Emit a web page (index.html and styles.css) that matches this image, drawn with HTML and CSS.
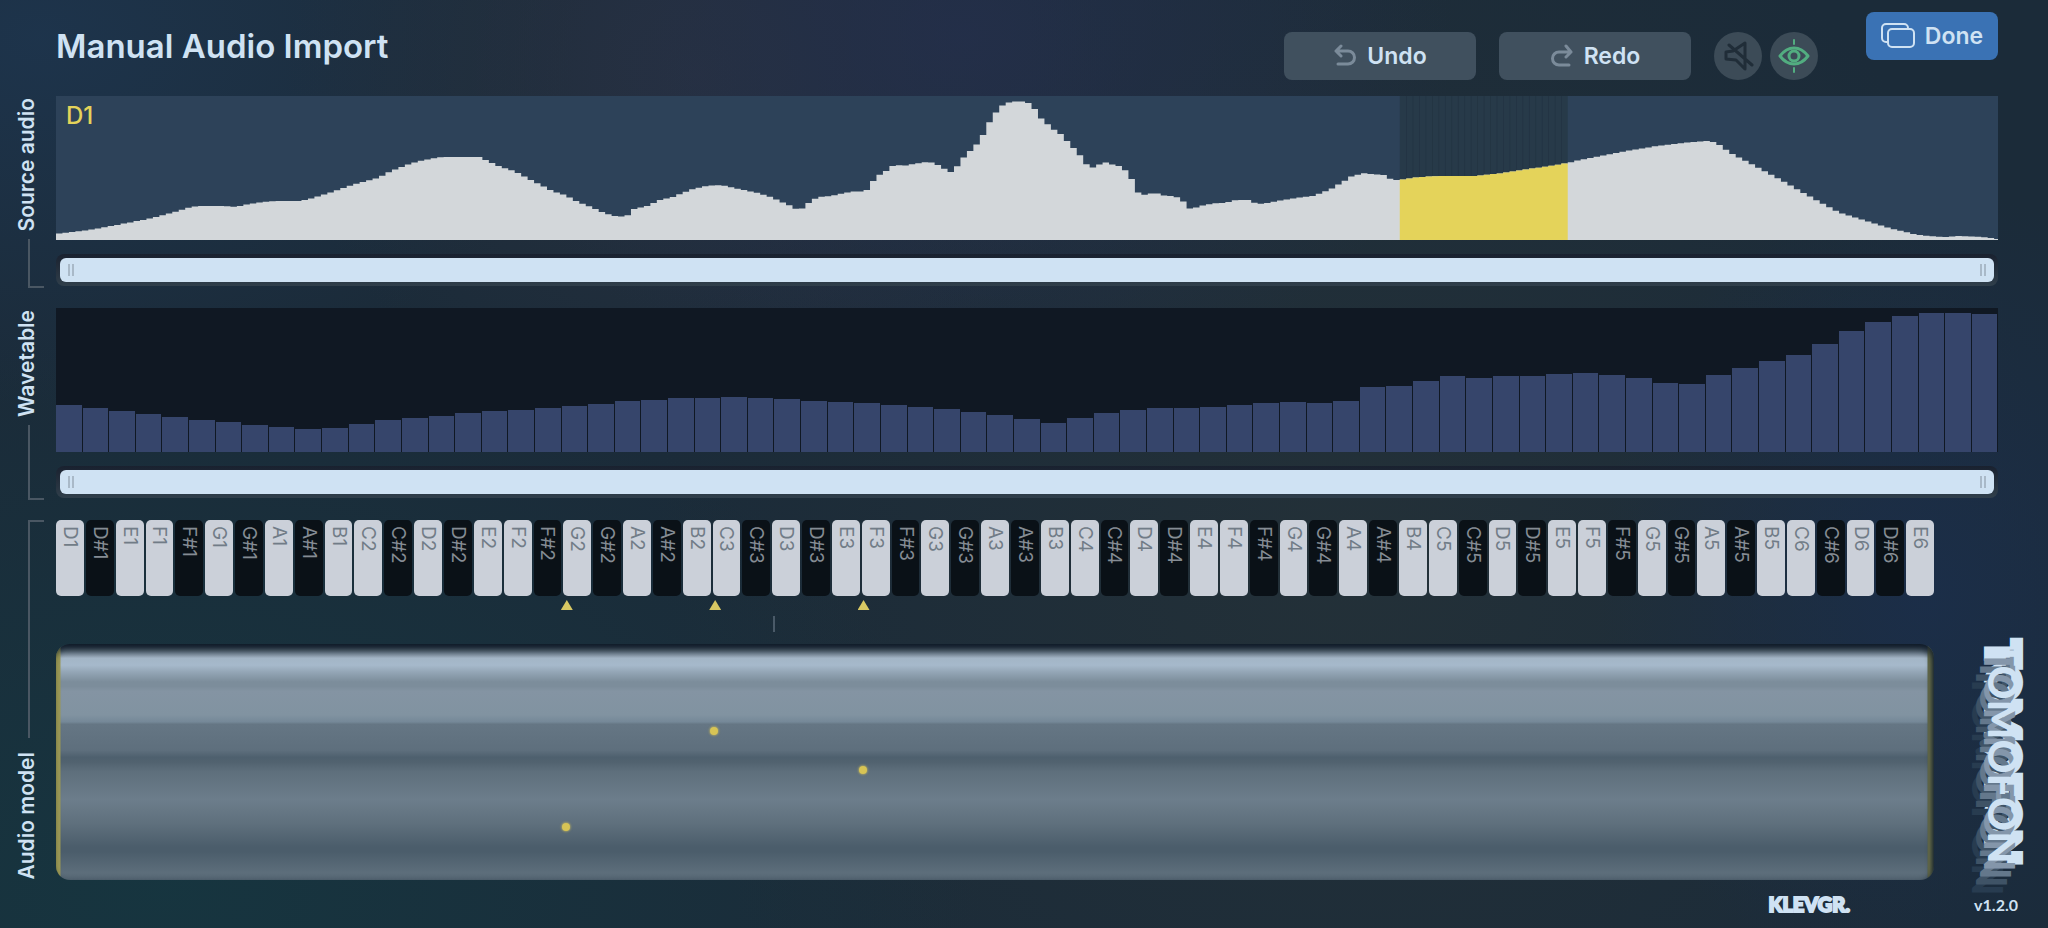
FILE: index.html
```html
<!DOCTYPE html>
<html lang="en">
<head>
    <meta charset="UTF-8">
    <meta name="viewport" content="width=device-width, initial-scale=1.0">
    <title>Tomofon - Manual Audio Import</title>

    <link rel="stylesheet" href="styles.css">
</head>
<body>

<div class="app">
    <header class="header">
        <h1 class="title">Manual Audio Import</h1>

        <div class="tools">
            <button class="btn" type="button">
                <svg class="btn-icon" width="24" height="24" viewBox="0 0 24 24">
                    <path d="M8 2L3 7l5 5M3 7h12a6 6 0 0 1 0 13H5"/>
                </svg>
                Undo
            </button>
            <button class="btn" type="button">
                <svg class="btn-icon" width="24" height="24" viewBox="0 0 24 24">
                    <path d="M16 2l5 6-5 5M21 8H9a6 6 0 0 0 0 13h10"/>
                </svg>
                Redo
            </button>
            <div class="toggles">
                <button class="round muted" type="button" aria-label="Mute">
                    <svg width="32" height="32" viewBox="0 0 32 32">
                        <path d="M4 12l7-1L23 3v26l-9-9-10-1zM7 5l23 20"/>
                    </svg>
                </button>
                <button class="round view" type="button" aria-label="Follow view">
                    <svg width="36" height="36" viewBox="0 0 36 36">
                        <path d="M4 18q6-8 14-8t14 8q-6 8-14 8T4 18z"/>
                        <circle cx="18" cy="18" r="5"/>
                        <path class="thin" d="M18 2v4M18 30v4"/>
                    </svg>
                </button>
            </div>
        </div>

        <button class="btn done" type="button">
            <svg width="34" height="26" viewBox="0 0 34 26">
                <path d="M7 19H5a4 4 0 0 1-4-4V5a4 4 0 0 1 4-4h18a4 4 0 0 1 4 4v1"/>
                <rect x="7" y="6" width="26" height="18" rx="4"/>
            </svg>
            Done
        </button>
    </header>

    <section class="row">
        <div class="rail">
            <h2 class="rail-label">Source audio</h2>
            <div class="bracket"></div>
        </div>
        <div class="panel">
            <div class="chart source">
                <span class="note">D1</span>
                <svg class="wave" id="wave" viewBox="0 0 3006 144" preserveAspectRatio="none"></svg>
            </div>
            <div class="scroll">
                <div class="thumb">
                    <button class="grip" type="button" aria-label="Source range start"></button>
                    <button class="grip" type="button" aria-label="Source range end"></button>
                </div>
            </div>
        </div>
    </section>

    <section class="row">
        <div class="rail">
            <h2 class="rail-label">Wavetable</h2>
            <div class="bracket"></div>
        </div>
        <div class="panel">
            <div class="chart table" id="table"></div>
            <div class="scroll">
                <div class="thumb">
                    <button class="grip" type="button" aria-label="Wavetable range start"></button>
                    <button class="grip" type="button" aria-label="Wavetable range end"></button>
                </div>
            </div>
        </div>
    </section>

    <section class="row model-row">
        <div class="rail">
            <div class="bracket top"></div>
            <h2 class="rail-label">Audio model</h2>
        </div>
        <div class="model-col">
            <div class="keys" id="keys"></div>
            <div class="markers" id="markers">
                <span class="tick"></span>
            </div>
            <div class="model" id="model"></div>
        </div>
        <div class="brand">
            <div class="logo">TOMOFON</div>
        </div>
    </section>

    <footer class="footer">
        <span class="maker">KLEVGR.</span>
        <span class="version">v1.2.0</span>
    </footer>
</div>

<script src="script.js"></script>
</body>
</html>
```
FILE: styles.css
```css
* {
    box-sizing: border-box;
}

body {
    margin: 0;
    color: #cfe2f3;
    font-family: "Inter", sans-serif;
    background:
        radial-gradient(ellipse 24% 40% at 47% 4%, rgba(36, 47, 76, 0.8), transparent),
        radial-gradient(ellipse 20% 40% at 34% 8%, rgba(42, 50, 64, 0.8), transparent),
        radial-gradient(ellipse 26% 40% at 2% 4%, rgba(30, 54, 80, 0.8), transparent),
        radial-gradient(ellipse 40% 60% at 8% 96%, rgba(22, 54, 64, 0.9), transparent),
        radial-gradient(ellipse 16% 44% at 94% 64%, rgba(27, 46, 74, 0.9), transparent),
        radial-gradient(ellipse 34% 80% at 66% 60%, rgba(36, 49, 56, 0.9), transparent),
        #1b2b39;
}

button {
    font-family: inherit;
    color: inherit;
    border: none;
    cursor: pointer;
}

svg {
    fill: none;
    stroke: currentColor;
    stroke-width: 2;
    stroke-linecap: round;
    stroke-linejoin: round;
}

.app {
    min-height: 100vh;
    display: flex;
    flex-direction: column;
}

/* header */

.header {
    height: 96px;
    display: flex;
    align-items: flex-start;
    padding: 12px 50px 0 56px;
}

.title {
    margin: 12px auto 0 0;
    font-size: 33px;
    line-height: 44px;
    font-weight: 600;
}

.tools {
    display: flex;
    gap: 23px;
    margin: 20px 48px 0 0;
}

.toggles {
    display: flex;
    gap: 8px;
}

.btn {
    width: 192px;
    height: 48px;
    display: flex;
    align-items: center;
    justify-content: center;
    gap: 10px;
    padding: 0;
    font-size: 23px;
    font-weight: 600;
    border-radius: 8px;
    background: #40505e;
}

.btn-icon {
    color: #7b8b9a;
    stroke-width: 3;
}

.done {
    width: 132px;
    background: #3a72b4;
}

.round {
    width: 48px;
    height: 48px;
    display: flex;
    align-items: center;
    justify-content: center;
    padding: 0;
    border-radius: 50%;
    background: #3c4b57;
}

.muted {
    color: #202d38;
}

.view {
    color: #52ad80;
}

.round svg {
    stroke-width: 3;
}

.round .thin {
    stroke-width: 2;
}

/* rows with the vertical label on the left */

.row {
    display: flex;
    margin-bottom: 18px;
}

.rail {
    flex: 0 0 56px;
    display: flex;
    flex-direction: column;
    padding: 2px 0 2px 11px;
}

.rail-label {
    width: 32px;
    margin: 0;
    font-size: 21px;
    line-height: 32px;
    font-weight: 600;
    writing-mode: vertical-rl;
    transform: rotate(180deg);
}

.bracket {
    flex: 1;
    width: 16px;
    margin: 8px 0 0 17px;
    border-left: 2px solid #4a5763;
    border-bottom: 2px solid #4a5763;
}

.bracket.top {
    margin: 0 0 14px 17px;
    border-top: 2px solid #4a5763;
    border-bottom: none;
}

.panel {
    flex: 1;
    margin-right: 50px;
    padding-bottom: 4px;
}

.chart {
    height: 144px;
    position: relative;
}

.source {
    background: #2d4259;
}

.note {
    position: absolute;
    left: 10px;
    top: 4px;
    font-size: 24px;
    line-height: 32px;
    font-weight: 500;
    color: #e4d35a;
}

.wave {
    display: block;
    width: 100%;
    height: 100%;
    stroke: none;
}

.wave-fill {
    fill: #d3d7da;
}

.wave-shade {
    fill: #273a49;
}

.wave-line {
    fill: #223342;
}

.wave-selected {
    fill: #e4d35a;
}

.table {
    display: flex;
    align-items: flex-end;
    gap: 1px;
    background: #101823;
}

.bar {
    flex: 1;
    background: #36456b;
}

.scroll {
    margin-top: 14px;
    padding: 4px;
    border-radius: 8px;
    background: linear-gradient(#19212f, #303f4b);
}

.thumb {
    height: 24px;
    display: flex;
    align-items: center;
    justify-content: space-between;
    padding: 0 8px;
    border-radius: 6px;
    background: #cfe2f3;
}

.grip {
    width: 6px;
    height: 12px;
    padding: 0;
    border: solid #a9b9c8;
    border-width: 0 2px;
    background: none;
    cursor: ew-resize;
}

/* keyboard and model */

.model-row {
    flex: 1;
    margin: 0;
}

.model-row .rail {
    padding-top: 0;
    padding-bottom: 0;
}

.model-col {
    flex: 1;
    min-width: 0;
    display: flex;
    flex-direction: column;
}

.keys {
    height: 76px;
    display: flex;
    gap: 2px;
}

.key {
    flex: 1;
    min-width: 0;
    padding: 6px 0 0;
    display: flex;
    align-items: center;
    justify-content: flex-start;
    font-size: 19px;
    line-height: 26px;
    writing-mode: vertical-rl;
    border-radius: 5px;
    color: #717c87;
    background: #cbd0d9;
}

.key.sharp {
    color: #858c94;
    background: #0a1117;
}

.markers {
    height: 48px;
    position: relative;
}

.marker {
    position: absolute;
    top: 4px;
    width: 12px;
    height: 10px;
    margin-left: -6px;
    background: #d8c863;
    clip-path: polygon(50% 0, 100% 100%, 0 100%);
}

.tick {
    position: absolute;
    top: 20px;
    left: 38.2%;
    width: 2px;
    height: 16px;
    background: #4a5a68;
}

.model {
    flex: 1;
    min-height: 236px;
    position: relative;
    overflow: hidden;
    border-radius: 14px;
    box-shadow: inset -2px 4px 6px rgba(12, 24, 38, 0.8);
    background:
        linear-gradient(to right, #a7a355 0, #9c9a58 4px, transparent 5px),
        linear-gradient(to left, #3c4a48 0, #5f6848 2px, #70744e 5px, #5f6848 6px, transparent 7px),
        linear-gradient(
            #1b2734 0%,
            #52626f 3%,
            #8999a9 5%,
            #a3b5c6 6%,
            #a6b9cb 9%,
            #93a5b5 12%,
            #7c8d9b 16%,
            #7c8d9b 18%,
            #8494a3 20%,
            #8193a1 30%,
            #758898 33%,
            #657684 34%,
            #5e6f7d 45%,
            #4e606e 48%,
            #51626f 50%,
            #5e6f7c 54%,
            #6c7d8b 66%,
            #5f707d 76%,
            #4b5d6b 86%,
            #4b5d6b 88%,
            #5d6e7b 97%,
            #536471 100%
        );
}

.dot {
    position: absolute;
    width: 8px;
    height: 8px;
    margin: -4px 0 0 -5px;
    border-radius: 50%;
    background: #d7c455;
    box-shadow: 0 0 2px 1px rgba(215, 196, 85, 0.5);
}

.brand {
    flex: 0 0 114px;
    display: flex;
    justify-content: flex-end;
    align-items: flex-end;
    padding: 0 20px 16px 0;
}

.logo {
    font-family: "Lato", sans-serif;
    font-size: 42px;
    line-height: 48px;
    font-weight: 900;
    writing-mode: vertical-rl;
    -webkit-text-stroke: 8px #cfe2f3;
    stroke-linejoin: round;
    paint-order: stroke fill;
    text-shadow:
        8px 4px 0 #8496aa,
        16px 8px 0 #64788c,
        24px 12px 0 #3f5366,
        32px 16px 0 #283c50;
}

.footer {
    height: 48px;
    display: flex;
    justify-content: flex-end;
    align-items: center;
    gap: 124px;
    padding-right: 30px;
    font-family: "Lato", sans-serif;
}

.maker {
    font-size: 20px;
    font-weight: 900;
    -webkit-text-stroke: 2px #cfe2f3;
}

.version {
    font-size: 16px;
    font-weight: bold;
}
```
FILE: script.js
```js
// amplitude envelope of the source audio: [position, level]
const envelope = [
    [0, 6], [25, 9], [45, 12], [71, 17], [97, 22], [122, 29], [135, 33], [142, 34], [155, 34], [167, 34],
    [180, 33], [193, 36], [206, 38], [219, 39], [244, 39], [257, 42], [270, 46], [296, 55], [322, 62],
    [335, 69], [348, 74], [360, 78], [373, 81], [386, 83], [399, 83], [423, 83], [432, 79], [445, 73],
    [458, 69], [471, 62], [483, 56], [496, 49], [509, 45], [522, 38], [535, 33], [548, 27], [562, 23],
    [571, 24], [578, 31], [591, 34], [604, 40], [617, 43], [624, 46], [637, 51], [650, 54], [665, 55],
    [683, 51], [702, 47], [715, 43], [728, 37], [737, 33], [743, 29], [749, 34], [755, 39], [762, 43],
    [775, 44], [788, 47], [800, 49], [807, 48], [813, 51], [820, 64], [826, 66], [833, 71], [839, 76],
    [846, 74], [858, 76], [871, 78], [879, 77], [885, 73], [894, 68], [898, 68], [903, 77], [909, 84],
    [916, 91], [922, 97], [929, 108], [935, 121], [942, 130], [948, 136], [955, 138], [962, 139],
    [969, 138], [975, 136], [981, 128], [988, 117], [994, 115], [1000, 108], [1007, 105], [1013, 96],
    [1020, 90], [1026, 82], [1033, 72], [1039, 73], [1046, 77], [1052, 78], [1059, 74], [1065, 74],
    [1072, 67], [1078, 57], [1084, 43], [1090, 46], [1100, 47], [1110, 44], [1117, 44], [1123, 42],
    [1129, 37], [1135, 30], [1141, 33], [1148, 35], [1161, 37], [1168, 37], [1180, 40], [1193, 40],
    [1199, 37], [1206, 36], [1222, 39], [1240, 42], [1257, 44], [1270, 49], [1277, 52], [1283, 56],
    [1290, 60], [1296, 64], [1309, 67], [1315, 66], [1328, 65], [1336, 60], [1344, 60], [1364, 63],
    [1385, 64], [1421, 64], [1447, 67], [1473, 71], [1488, 73], [1512, 77], [1524, 80], [1550, 85],
    [1576, 90], [1601, 94], [1627, 97], [1650, 99], [1658, 98], [1662, 96], [1673, 88], [1699, 74],
    [1725, 60], [1751, 45], [1782, 28], [1807, 20], [1833, 12], [1862, 5], [1887, 3], [1905, 4],
    [1926, 3], [1942, 1]
];
const envelopeLength = 1942;
const waveWidth = 3006;
const barWidth = 10;
const selection = [208, 234];

function levelAt(pos) {
    for (let i = 1; i < envelope.length; i++) {
        const [x0, y0] = envelope[i - 1];
        const [x1, y1] = envelope[i];
        if (pos <= x1) {
            return y0 + (y1 - y0) * (pos - x0) / (x1 - x0);
        }
    }
    return 0;
}

function stepPath(from, to) {
    let d = "M" + from * barWidth + " 144";
    for (let i = from; i < to; i++) {
        const pos = (i + 0.5) * barWidth / waveWidth * envelopeLength;
        d += "V" + (144 - levelAt(pos)).toFixed(1) + "H" + (i + 1) * barWidth;
    }
    return d + "V144Z";
}

const selX = selection[0] * barWidth;
const selWidth = (selection[1] - selection[0]) * barWidth;
let lines = "";
for (let i = selection[0] + 1; i < selection[1]; i++) {
    lines += `<rect class="wave-line" x="${i * barWidth}" y="0" width="1" height="144"/>`;
}
document.getElementById("wave").innerHTML =
    `<rect class="wave-shade" x="${selX}" y="0" width="${selWidth}" height="144"/>` + lines +
    `<path class="wave-fill" d="${stepPath(0, 301)}"/>` +
    `<path class="wave-selected" d="${stepPath(selection[0], selection[1])}"/>`;

// wavetable partials
const partials = [
    47, 44, 41, 38, 35, 32, 30, 27, 25, 23, 24, 28, 32, 34, 36, 39, 41, 42, 44, 46, 48, 51, 52, 54, 54,
    55, 54, 53, 51, 50, 49, 47, 45, 43, 40, 37, 33, 29, 34, 39, 42, 44, 44, 45, 47, 49, 50, 49, 51, 65,
    66, 71, 76, 74, 76, 76, 78, 79, 77, 74, 69, 68, 77, 84, 91, 97, 108, 121, 130, 136, 139, 139, 138
];
const table = document.getElementById("table");
partials.forEach(level => {
    const bar = document.createElement("div");
    bar.className = "bar";
    bar.style.height = level + "px";
    table.appendChild(bar);
});

// keyboard from D1 to E6
const names = ["C", "C#", "D", "D#", "E", "F", "F#", "G", "G#", "A", "A#", "B"];
const keys = document.getElementById("keys");
for (let n = 2; n <= 64; n++) {
    const name = names[n % 12];
    const key = document.createElement("button");
    key.type = "button";
    key.className = name.includes("#") ? "key sharp" : "key";
    key.textContent = name + (Math.floor(n / 12) + 1);
    keys.appendChild(key);
}

// snapshots on the audio model, in percent
const snapshots = [
    { x: 27.2, y: 77.5 },
    { x: 35.1, y: 36.7 },
    { x: 43, y: 53.4 }
];
const markers = document.getElementById("markers");
const model = document.getElementById("model");
snapshots.forEach(s => {
    const marker = document.createElement("span");
    marker.className = "marker";
    marker.style.left = s.x + "%";
    markers.appendChild(marker);

    const dot = document.createElement("span");
    dot.className = "dot";
    dot.style.left = s.x + "%";
    dot.style.top = s.y + "%";
    model.appendChild(dot);
});
```
